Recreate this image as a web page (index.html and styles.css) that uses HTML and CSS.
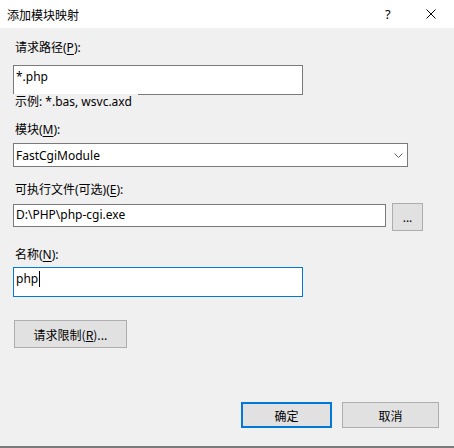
FILE: index.html
```html
<!DOCTYPE html>
<html lang="zh-CN">
<head>
    <meta charset="UTF-8">
    <title>添加模块映射</title>
    <link rel="stylesheet" href="styles.css">
</head>
<body>
    <div class="dialog">
        <div class="titlebar">
            <span class="title">添加模块映射</span>
            <span class="title-help">?</span>
            <span class="title-close">
                <svg width="10" height="10" viewBox="0 0 10 10">
                    <path d="M0.5 0.5 L9.5 9.5 M9.5 0.5 L0.5 9.5" stroke="#000" stroke-width="1" fill="none"/>
                </svg>
            </span>
        </div>

        <div class="content">
            <div class="label">请求路径(<u>P</u>):</div>
            <div class="field tall path-field">*.php</div>
            <div class="hint">示例: *.bas, wsvc.axd</div>

            <div class="label gap-m">模块(<u>M</u>):</div>
            <div class="select">
                <span>FastCgiModule</span>
                <svg class="chevron" width="9" height="5" viewBox="0 0 9 5">
                    <path d="M0.5 0.5 L4.5 4.5 L8.5 0.5" stroke="#606060" stroke-width="1" fill="none"/>
                </svg>
            </div>

            <div class="label gap-e">可执行文件(可选)(<u>E</u>):</div>
            <div class="file-row">
                <div class="field exe-field">D:\PHP\php-cgi.exe</div>
                <button class="btn browse">...</button>
            </div>

            <div class="label gap-n">名称(<u>N</u>):</div>
            <div class="field tall focused name-field">php<span class="caret"></span></div>

            <button class="btn limits">请求限制(<u>R</u>)...</button>
        </div>

        <div class="footer">
            <button class="btn ok">确定</button>
            <button class="btn cancel">取消</button>
        </div>
    </div>
</body>
</html>
```

FILE: styles.css
```css
body {
    margin: 0;
    padding: 0;
    font-family: 'Noto Sans', 'Noto Sans CJK SC', sans-serif;
    font-size: 12px;
    color: #000;
}

.dialog {
    width: 454px;
    height: 448px;
    box-sizing: border-box;
    background: #f0f0f0;
    border-bottom: 2px solid #7a7a7a;
    display: flex;
    flex-direction: column;
}

.titlebar {
    height: 28px;
    background: #ffffff;
    display: flex;
    align-items: center;
    padding-left: 7px;
}

.title {
    flex: 1;
    font-family: 'Noto Sans CJK SC', sans-serif;
    font-size: 12px;
}

.title-help {
    width: 41px;
    font-size: 13px;
}

.title-close {
    width: 28px;
    display: flex;
}

.content {
    padding: 12px 0 0 13px;
    display: flex;
    flex-direction: column;
    align-items: flex-start;
}

.label {
    line-height: 16px;
    height: 16px;
    padding-left: 2px;
}

.label u {
    text-decoration-thickness: 1px;
    text-underline-offset: 2px;
}

.field {
    box-sizing: border-box;
    background: #ffffff;
    border: 1px solid #7a7a7a;
    padding: 2px 0 0 2px;
    line-height: 18px;
    white-space: nowrap;
}

.field.tall {
    height: 30px;
    width: 290px;
    margin-top: 9px;
}

.field.focused {
    border-color: #0078d7;
    margin-top: 4px;
}

.hint {
    position: relative;
    width: 125px;
    box-sizing: border-box;
    margin-top: -1px;
    padding-left: 2px;
    height: 16px;
    line-height: 16px;
    background: #f0f0f0;
}

.gap-m {
    margin-top: 12px;
}

.gap-e {
    margin-top: 15px;
}

.gap-n {
    margin-top: 16px;
}

.select {
    box-sizing: border-box;
    margin-top: 5px;
    width: 395px;
    height: 24px;
    background: #ffffff;
    border: 1px solid #7a7a7a;
    display: flex;
    align-items: center;
    justify-content: space-between;
    padding: 0 4px 0 2px;
}

.file-row {
    margin-top: 5px;
    display: flex;
    align-items: flex-start;
    gap: 6px;
}

.exe-field {
    width: 373px;
    height: 23px;
    margin-top: 1px;
    padding-top: 1px;
}

.caret {
    display: inline-block;
    width: 1px;
    height: 16px;
    background: #000;
    vertical-align: -4px;
    margin-left: 1px;
}

.btn {
    box-sizing: border-box;
    font-family: 'Noto Sans CJK SC', sans-serif;
    font-size: 12px;
    color: #000;
    background: #e1e1e1;
    border: 1px solid #adadad;
    padding: 0;
    margin: 0;
}

.browse {
    width: 31px;
    height: 28px;
    font-family: 'Noto Sans', sans-serif;
}

.limits {
    margin: 23px 0 0 1px;
    width: 113px;
    height: 28px;
}

.footer {
    margin-top: auto;
    display: flex;
    justify-content: flex-end;
    gap: 10px;
    padding: 0 15px 18px 0;
}

.ok {
    width: 91px;
    height: 26px;
    border: 2px solid #0078d7;
}

.cancel {
    width: 97px;
    height: 26px;
}
```
